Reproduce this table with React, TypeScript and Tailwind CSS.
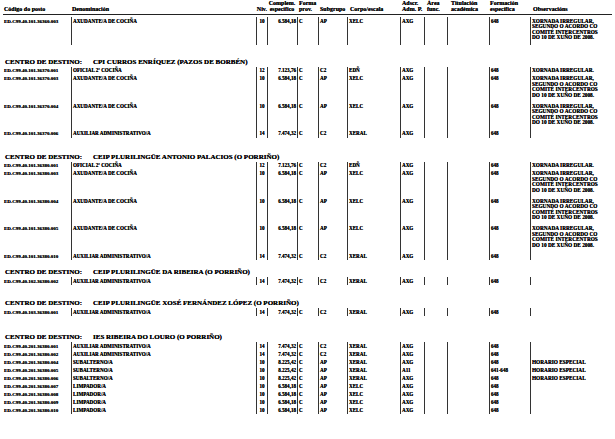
type Row = {
  code: string;
  name: string;
  niv: string;
  compl: string;
  corpo: string;
  sub: string;
  adscr?: string;
  form?: string;
  obs?: string[];
};

type Section = {
  title?: string;
  gap: string;
  rows: Row[];
};

const XORNADA = [
  "XORNADA IRREGULAR,",
  "SEGUNDO O ACORDO CO",
  "COMITÉ INTERCENTROS",
  "DO 10 DE XUÑO DE 2008.",
];

const cocina = (code: string): Row => ({
  code,
  name: "AXUDANTE/A DE COCIÑA",
  niv: "10",
  compl: "6.584,18",
  sub: "AP",
  corpo: "XELC",
  obs: XORNADA,
});

const oficial = (code: string): Row => ({
  code,
  name: "OFICIAL 2ª COCIÑA",
  niv: "12",
  compl: "7.123,76",
  sub: "C2",
  corpo: "EDÑ",
  obs: ["XORNADA IRREGULAR."],
});

const auxiliar = (code: string): Row => ({
  code,
  name: "AUXILIAR ADMINISTRATIVO/A",
  niv: "14",
  compl: "7.474,32",
  sub: "C2",
  corpo: "XERAL",
});

const subalterno = (code: string, adscr = "AXG", form = "648"): Row => ({
  code,
  name: "SUBALTERNO/A",
  niv: "10",
  compl: "8.225,42",
  sub: "AP",
  corpo: "XERAL",
  adscr,
  form,
  obs: ["HORARIO ESPECIAL"],
});

const limpador = (code: string): Row => ({
  code,
  name: "LIMPADOR/A",
  niv: "10",
  compl: "6.584,18",
  sub: "AP",
  corpo: "XELC",
});

const SECTIONS: Section[] = [
  { gap: "mt-[2px]", rows: [cocina("ED.C99.40.101.36360.003")] },
  {
    title: "CPI CURROS ENRÍQUEZ (PAZOS DE BORBÉN)",
    gap: "mt-[13px]",
    rows: [
      oficial("ED.C99.40.101.36370.001"),
      cocina("ED.C99.40.101.36370.003"),
      cocina("ED.C99.40.101.36370.004"),
      auxiliar("ED.C99.40.101.36370.006"),
    ],
  },
  {
    title: "CEIP PLURILINGÜE ANTONIO PALACIOS (O PORRIÑO)",
    gap: "mt-[15px]",
    rows: [
      oficial("ED.C99.40.101.36380.001"),
      cocina("ED.C99.40.101.36380.003"),
      cocina("ED.C99.40.101.36380.004"),
      cocina("ED.C99.40.101.36380.005"),
      auxiliar("ED.C99.40.101.36380.010"),
    ],
  },
  {
    title: "CEIP PLURILINGÜE DA RIBEIRA (O PORRIÑO)",
    gap: "mt-[8px]",
    rows: [auxiliar("ED.C99.40.102.36380.002")],
  },
  {
    title: "CEIP PLURILINGÜE XOSÉ FERNÁNDEZ LÓPEZ (O PORRIÑO)",
    gap: "mt-[14px]",
    rows: [auxiliar("ED.C99.40.103.36380.001")],
  },
  {
    title: "IES RIBEIRA DO LOURO (O PORRIÑO)",
    gap: "mt-[17px]",
    rows: [
      auxiliar("ED.C99.40.201.36380.001"),
      auxiliar("ED.C99.40.201.36380.002"),
      subalterno("ED.C99.40.201.36380.004"),
      subalterno("ED.C99.40.201.36380.005", "A11", "641-648"),
      subalterno("ED.C99.40.201.36380.006"),
      limpador("ED.C99.40.201.36380.007"),
      limpador("ED.C99.40.201.36380.008"),
      limpador("ED.C99.40.201.36380.009"),
      limpador("ED.C99.40.201.36380.010"),
    ],
  },
];

// column widths line up with the ruling of the printed table (x = 3 .. 612)
const COLS = [
  "w-[68px] pl-[1px] text-[5px]",
  "w-[185px] border-l border-[#333] pl-[1px]",
  "w-[11px] border-l border-[#333] text-center",
  "w-[30px] border-l border-[#333] text-right pr-[1px]",
  "w-[21px] border-l border-[#333] pl-[1px]",
  "w-[29px] border-l border-[#333] pl-[1px]",
  "w-[53px] border-l border-[#333] pl-[1px]",
  "w-[24px] border-l border-[#333] pl-[1px]",
  "w-[23px] border-l border-[#333]",
  "w-[42px] border-l border-[#333]",
  "w-[41px] border-l border-[#333] pl-[1px]",
  "w-[82px] border-l border-[#333] pl-[1px] text-[5.3px]",
];

function HeaderRow() {
  const cell = "shrink-0 whitespace-nowrap";
  return (
    <div className="ml-[3px] w-[609px] h-[15px] flex items-end border-b border-[#222] pb-[2px] text-[6px] leading-[6px] font-bold">
      <div className={`${cell} w-[68px] pl-[1px]`}>Código do posto</div>
      <div className={`${cell} w-[185px] pl-[1px]`}>Denominación</div>
      <div className={`${cell} w-[11px] text-right`}>Niv.</div>
      <div className={`${cell} w-[30px] text-center`}>
        Complem.
        <br />
        específico
      </div>
      <div className={`${cell} w-[21px] pl-[2px]`}>
        Forma
        <br />
        prov.
      </div>
      <div className={`${cell} w-[29px] pl-[2px]`}>Subgrupo</div>
      <div className={`${cell} w-[53px] pl-[3px]`}>Corpo/escala</div>
      <div className={`${cell} w-[24px] pl-[2px]`}>
        Adscr.
        <br />
        Adm. P.
      </div>
      <div className={`${cell} w-[23px] pl-[3px]`}>
        Área
        <br />
        func.
      </div>
      <div className={`${cell} w-[42px] pl-[4px]`}>
        Titulación
        <br />
        académica
      </div>
      <div className={`${cell} w-[41px] pl-[1px]`}>
        Formación
        <br />
        específica
      </div>
      <div className={`${cell} w-[82px] pl-[3px]`}>Observacións</div>
    </div>
  );
}

function DataRow({ row }: { row: Row }) {
  const tall = (row.obs?.length ?? 0) > 1;
  const values = [
    row.code,
    row.name,
    row.niv,
    row.compl,
    "C",
    row.sub,
    row.corpo,
    row.adscr ?? "AXG",
    "",
    "",
    row.form ?? "648",
  ];
  return (
    <div className={`flex ${tall ? "h-[27.5px]" : "h-[8px]"}`}>
      {values.map((v, i) => (
        <div key={i} className={`shrink-0 whitespace-nowrap pt-[1.5px] ${COLS[i]}`}>
          {v}
        </div>
      ))}
      <div className={`shrink-0 whitespace-nowrap pt-[1.5px] ${COLS[11]}`}>
        {row.obs?.map((l) => (
          <div key={l}>{l}</div>
        ))}
      </div>
    </div>
  );
}

export default function App() {
  return (
    <div className="w-[615px] h-[439px] bg-white text-[#0a0a0a] font-['Liberation_Serif',serif] overflow-hidden [text-shadow:0_0_0.3px_#000]">
      <HeaderRow />
      {SECTIONS.map((s, i) => (
        <div key={i} className={s.gap}>
          {s.title && (
            <div className="ml-[5px] h-[9px] leading-[9px] text-[7px] font-bold whitespace-nowrap">
              CENTRO DE DESTINO:<span className="ml-[11px]">{s.title}</span>
            </div>
          )}
          <div className="ml-[3px] w-[609px] text-[5.1px] leading-[5.5px] font-bold">
            {s.rows.map((r) => (
              <DataRow key={r.code} row={r} />
            ))}
          </div>
        </div>
      ))}
    </div>
  );
}
